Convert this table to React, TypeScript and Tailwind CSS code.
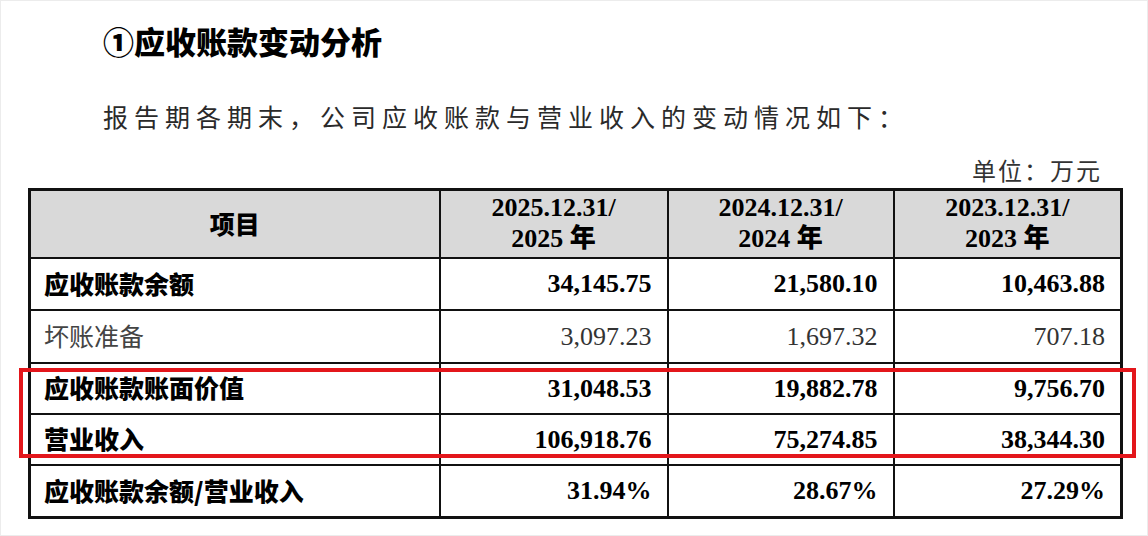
const rows = [
  { label: "应收账款余额", bold: true, values: ["34,145.75", "21,580.10", "10,463.88"], h: "h-[52px]" },
  { label: "坏账准备", bold: false, values: ["3,097.23", "1,697.32", "707.18"], h: "h-[53px]" },
  { label: "应收账款账面价值", bold: true, values: ["31,048.53", "19,882.78", "9,756.70"], h: "h-[51px]" },
  { label: "营业收入", bold: true, values: ["106,918.76", "75,274.85", "38,344.30"], h: "h-[51px]" },
  { label: "应收账款余额/营业收入", bold: true, values: ["31.94%", "28.67%", "27.29%"], h: "h-[53px]" },
];

const years = ["2025", "2024", "2023"];

const cjk = "font-['Noto_Sans_CJK_SC','Noto_Sans',sans-serif]";
const serif = "font-['Liberation_Serif','Noto_Sans_CJK_SC',serif]";

export default function App() {
  return (
    <div className="w-[1148px] h-[536px] bg-white overflow-hidden border border-[#ececec]">
      <div className="pl-[102px] pt-[19px]">
        <h1 className={`${cjk} text-[31px] leading-[42px] font-black text-black`}>
          ①应收账款变动分析
        </h1>
        <p className={`${cjk} mt-[36px] text-[25px] leading-[36px] tracking-[6px] text-[#2a2a2a]`}>
          报告期各期末，公司应收账款与营业收入的变动情况如下：
        </p>
      </div>
      <div className="flex justify-end pr-[45px] mt-[22px] h-[32px]">
        <span className={`${cjk} text-[24px] leading-[28px] tracking-[2px] text-[#333]`}>
          单位：万元
        </span>
      </div>

      <div className="relative ml-[27px] w-[1092px]">
        <table className="w-full border-collapse border-[3px] border-[#111] table-fixed">
          <colgroup>
            <col className="w-[410px]" />
            <col className="w-[228px]" />
            <col className="w-[226px]" />
            <col className="w-[228px]" />
          </colgroup>
          <thead>
            <tr className="bg-[#d9d9d9] h-[68px]">
              <th className={`${cjk} border-2 border-[#111] text-[25px] font-black text-black`}>项目</th>
              {years.map((y) => (
                <th key={y} className={`${serif} border-2 border-[#111] text-[26px] leading-[28px] font-bold text-black`}>
                  <div>{y}.12.31/</div>
                  <div>
                    {y} <span className={`${cjk} font-black`}>年</span>
                  </div>
                </th>
              ))}
            </tr>
          </thead>
          <tbody>
            {rows.map((r) => (
              <tr key={r.label} className={r.h}>
                <td
                  className={`${cjk} border-2 border-[#111] pl-[13px] text-[25px] ${
                    r.bold ? "font-black text-black" : "font-normal text-[#444]"
                  }`}
                >
                  {r.label}
                </td>
                {r.values.map((v, i) => (
                  <td
                    key={i}
                    className={`${serif} border-2 border-[#111] pr-[15px] text-right text-[26px] ${
                      r.bold ? "font-bold text-black" : "font-normal text-[#333]"
                    }`}
                  >
                    {v}
                  </td>
                ))}
              </tr>
            ))}
          </tbody>
        </table>
        <div className="absolute left-[-9px] right-[-16px] top-[180px] h-[90px] border-[4px] border-[#e3161b] pointer-events-none" />
      </div>
    </div>
  );
}
